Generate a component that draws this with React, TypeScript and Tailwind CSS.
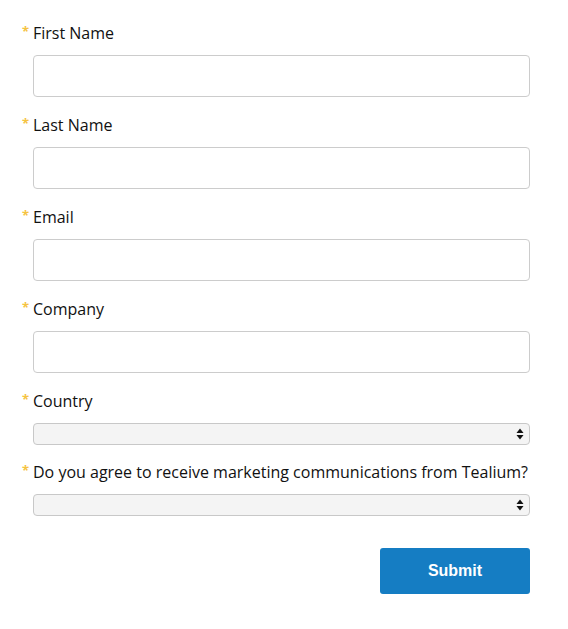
import React from 'react';

const font = { fontFamily: '"Open Sans", "Noto Sans", sans-serif' };

function Star() {
  return (
    <span className="w-[11px] shrink-0 text-[13px] font-bold leading-none text-[#f5c342] -mt-[4px]">
      *
    </span>
  );
}

function Label({ text }: { text: string }) {
  return (
    <div className="flex items-center h-[22px] text-[16px] text-[#111] leading-[22px]">
      <Star />
      <span>{text}</span>
    </div>
  );
}

function TextField({ label }: { label: string }) {
  return (
    <div className="flex flex-col pb-[17px]">
      <Label text={label} />
      <input
        type="text"
        className="ml-[11px] mt-[11px] h-[42px] w-[497px] rounded-[4px] border border-[#cccccc] bg-white px-2 outline-none"
      />
    </div>
  );
}

function Arrows() {
  return (
    <svg width="8" height="12" viewBox="0 0 8 12" className="absolute right-[5px] top-[4px]">
      <path d="M4 0.5 L7.5 5 L0.5 5 Z" fill="#111" />
      <path d="M4 11.5 L7.5 7 L0.5 7 Z" fill="#111" />
    </svg>
  );
}

function SelectField({ label, last }: { label: string; last?: boolean }) {
  return (
    <div className={last ? 'flex flex-col' : 'flex flex-col pb-[16px]'}>
      <Label text={label} />
      <div className="relative ml-[11px] mt-[11px] h-[22px] w-[497px] rounded-[4px] border border-[#c8c8c8] bg-[#f4f4f4]">
        <Arrows />
      </div>
    </div>
  );
}

export default function App() {
  return (
    <div className="w-[568px] h-[629px] bg-white pl-[22px] pt-[22px]" style={font}>
      <TextField label="First Name" />
      <TextField label="Last Name" />
      <TextField label="Email" />
      <TextField label="Company" />
      <SelectField label="Country" />
      <SelectField label="Do you agree to receive marketing communications from Tealium?" last />
      <div className="flex justify-end w-[508px] mt-[32px]">
        <button
          className="h-[46px] w-[150px] rounded-[3px] bg-[#157dc3] text-white text-[16px] font-bold"
          style={{ fontFamily: '"Liberation Sans", Arial, sans-serif' }}
        >
          Submit
        </button>
      </div>
    </div>
  );
}
